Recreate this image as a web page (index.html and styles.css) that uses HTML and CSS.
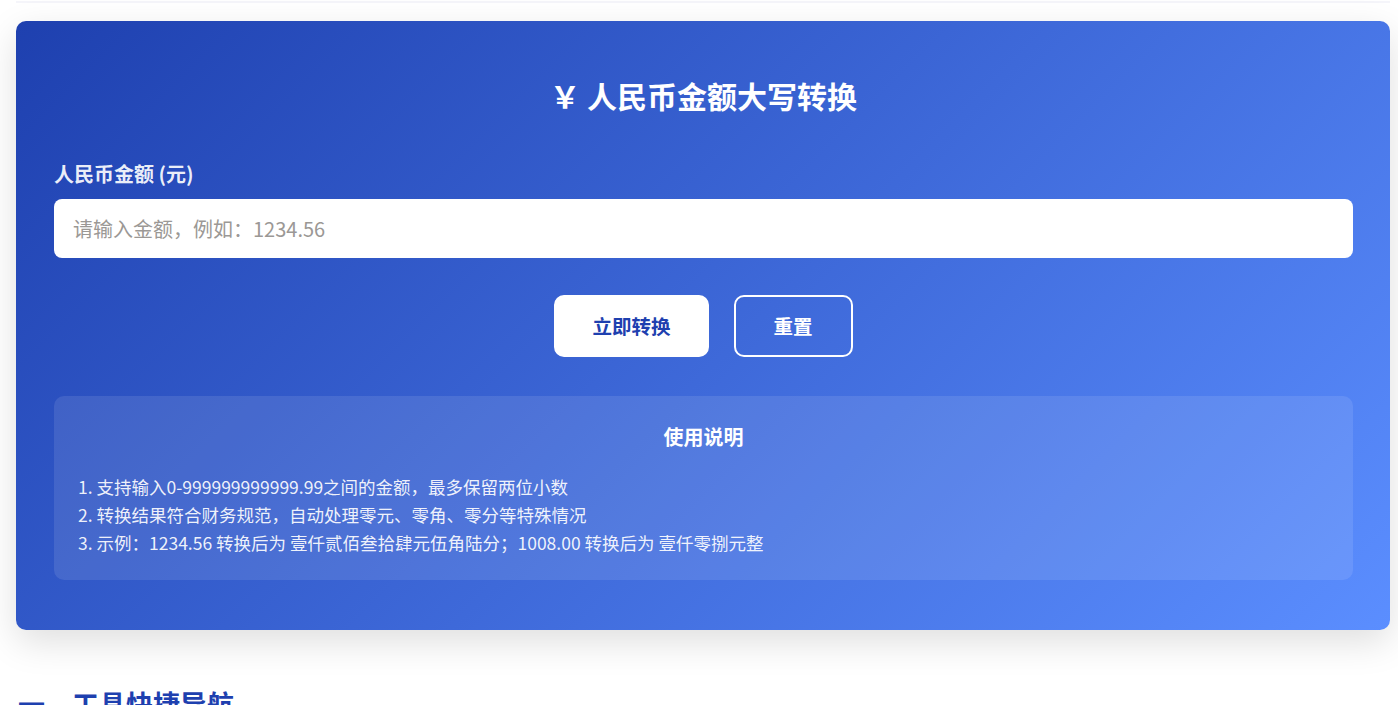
FILE: index.html
```html
<!DOCTYPE html>
<html lang="zh-CN">
<head>
    <meta charset="UTF-8">
    <meta name="viewport" content="width=device-width, initial-scale=1.0">
    <title>人民币金额大写转换</title>
    <link rel="stylesheet" href="styles.css">
</head>
<body>

<div class="page">
    <div class="top-rule"></div>

    <!-- 转换工具卡片 -->
    <section class="converter">
        <h1 class="converter-title">￥ 人民币金额大写转换</h1>

        <label class="field-label" for="amount">人民币金额 (元)</label>
        <input id="amount" class="amount-input" type="text" placeholder="请输入金额，例如：1234.56">

        <div class="actions">
            <button class="btn btn-primary" id="btn-convert">立即转换</button>
            <button class="btn btn-ghost" id="btn-reset">重置</button>
        </div>

        <div class="usage">
            <h3 class="usage-title">使用说明</h3>
            <ul class="usage-list">
                <li>1. 支持输入0-999999999999.99之间的金额，最多保留两位小数</li>
                <li>2. 转换结果符合财务规范，自动处理零元、零角、零分等特殊情况</li>
                <li>3. 示例：1234.56 转换后为 壹仟贰佰叁拾肆元伍角陆分；1008.00 转换后为 壹仟零捌元整</li>
            </ul>
        </div>
    </section>

    <h2 class="section-title">一、工具快捷导航</h2>
</div>

</body>
</html>
```

FILE: styles.css
```css
:root {
    --blue-dark: #1e40af;
    --blue-light: #5b8eff;
    --text-light: rgba(255,255,255,0.92);
}

* { margin: 0; padding: 0; box-sizing: border-box; }
body {
    font-family: "Noto Sans CJK SC", "Noto Sans", sans-serif;
    background-color: #ffffff;
    color: #1f2937;
    overflow: hidden;
}

.page { width: 1374px; margin-left: 16px; padding-top: 1px; }
.top-rule { height: 2px; background-color: #f5f5fa; }

/* 转换工具卡片 */
.converter {
    margin-top: 18px;
    padding: 52px 37px 50px 38px;
    border-radius: 10px;
    background: linear-gradient(135deg, var(--blue-dark) 0%, var(--blue-light) 100%);
    box-shadow: 0 12px 36px rgba(0,0,0,0.13);
    color: #ffffff;
}

.converter-title {
    font-size: 30px;
    line-height: 44px;
    font-weight: 700;
    text-align: center;
}

.field-label {
    display: block;
    margin-top: 43px;
    font-size: 20px;
    line-height: 27px;
    font-weight: 700;
    color: var(--text-light);
}

.amount-input {
    display: block;
    width: 100%;
    height: 59px;
    margin-top: 12px;
    padding: 0 19px;
    border: none;
    border-radius: 8px;
    background-color: #ffffff;
    font-family: inherit;
    font-size: 20px;
    color: #333;
    outline: none;
}
.amount-input::placeholder { color: #9b9895; }

.actions {
    display: flex;
    justify-content: center;
    gap: 25px;
    margin-top: 37px;
}
.btn {
    padding: 16px 36px;
    border: 2px solid #ffffff;
    border-radius: 10px;
    font-family: inherit;
    font-size: 19.5px;
    line-height: 26px;
    font-weight: 700;
    cursor: pointer;
}
.btn-primary { background-color: #ffffff; color: var(--blue-dark); }
.btn-ghost { padding: 16px 38px; background-color: transparent; color: #ffffff; }

/* 使用说明 */
.usage {
    margin-top: 39px;
    padding: 28px 24px 23px;
    border-radius: 10px;
    background-color: rgba(255,255,255,0.1);
}
.usage-title {
    font-size: 20px;
    line-height: 26px;
    font-weight: 700;
    text-align: center;
    margin-bottom: 23px;
}
.usage-list { list-style: none; }
.usage-list li {
    font-size: 17.5px;
    line-height: 28px;
    color: var(--text-light);
}

.section-title {
    margin-top: 60px;
    margin-left: 2px;
    font-size: 27px;
    line-height: 28px;
    font-weight: 700;
    color: var(--blue-dark);
}
```
